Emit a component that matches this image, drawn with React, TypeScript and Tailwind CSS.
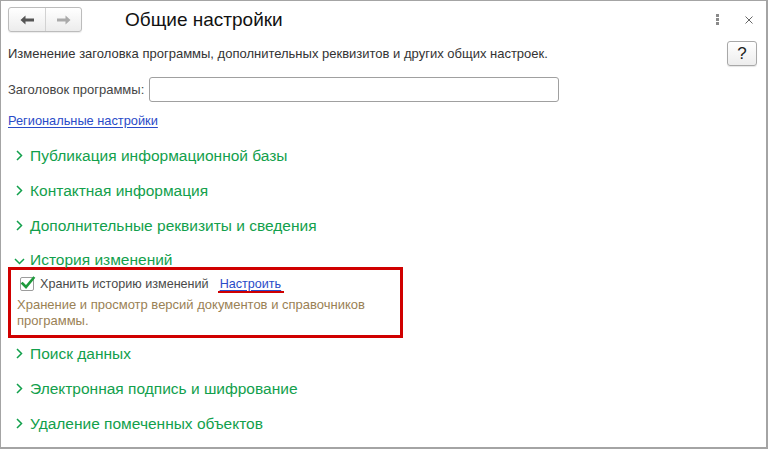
import React from "react";

const GREEN = "text-[#12a04c]";

function Chevron({ down = false }: { down?: boolean }) {
  return down ? (
    <svg width="11" height="7" viewBox="0 0 11 7" className="shrink-0">
      <path d="M1 1 L5.5 5.5 L10 1" fill="none" stroke="#12a04c" strokeWidth="1.5" />
    </svg>
  ) : (
    <svg width="7" height="11" viewBox="0 0 7 11" className="shrink-0">
      <path d="M1 1 L5.5 5.5 L1 10" fill="none" stroke="#12a04c" strokeWidth="1.5" />
    </svg>
  );
}

function Section({ title }: { title: string }) {
  return (
    <div className="h-[35px] flex items-center">
      <div className="w-[22px] flex justify-center pl-[1px]">
        <Chevron />
      </div>
      <span className={`text-[15.5px] ${GREEN}`}>{title}</span>
    </div>
  );
}

export default function App() {
  return (
    <div
      className="w-[768px] h-[449px] bg-white border-t border-l border-r-2 border-b-2 border-[#a4a4a4] overflow-hidden"
      style={{ fontFamily: '"Liberation Sans", Arial, sans-serif' }}
    >
      {/* header */}
      <div className="h-[38px] flex items-start pt-[6px] pl-[7px] pr-[13px]">
        <div className="flex h-[25px] w-[74px] rounded-[3px] border border-[#bcbcbc] bg-gradient-to-b from-white to-[#ececec] shadow-[0_1px_1px_rgba(0,0,0,0.08)]">
          <div className="w-[37px] flex items-center justify-center border-r border-[#d2d2d2]">
            <svg width="15" height="10" viewBox="0 0 15 10">
              <path d="M0.5 5 L5.5 0.5 L5.5 3.5 L14 3.5 L14 6.5 L5.5 6.5 L5.5 9.5 Z" fill="#555" />
            </svg>
          </div>
          <div className="flex-1 flex items-center justify-center">
            <svg width="15" height="10" viewBox="0 0 15 10">
              <path d="M14.5 5 L9.5 0.5 L9.5 3.5 L1 3.5 L1 6.5 L9.5 6.5 L9.5 9.5 Z" fill="#aaa" />
            </svg>
          </div>
        </div>
        <div className="ml-[43px] text-[19px] leading-[25px] text-[#111]">Общие настройки</div>
        <div className="ml-auto flex items-center h-[25px] gap-[26px]">
          <svg width="3" height="11" viewBox="0 0 3 11">
            <rect x="0" y="0" width="3" height="3" fill="#8a8a8a" />
            <rect x="0" y="4" width="3" height="3" fill="#8a8a8a" />
            <rect x="0" y="8" width="3" height="3" fill="#8a8a8a" />
          </svg>
          <svg width="8" height="8" viewBox="0 0 8 8">
            <path d="M0.5 0.5 L7.5 7.5 M7.5 0.5 L0.5 7.5" stroke="#666" strokeWidth="1" />
          </svg>
        </div>
      </div>

      {/* description */}
      <div className="mt-[2px] h-[25px] flex items-center pl-[7px] pr-[9px]">
        <span className="text-[13px] text-[#333]">
          Изменение заголовка программы, дополнительных реквизитов и других общих настроек.
        </span>
        <div className="ml-auto w-[30px] h-[25px] rounded-[3px] border border-[#a8a8a8] bg-gradient-to-b from-white to-[#ededed] flex items-center justify-center text-[17px] text-[#222] shadow-[0_1px_1px_rgba(0,0,0,0.1)]">
          ?
        </div>
      </div>

      {/* title input */}
      <div className="mt-[11px] h-[25px] flex items-center pl-[7px]">
        <span className="text-[13px] text-[#444]">Заголовок программы:</span>
        <div className="ml-[5px] w-[410px] h-[25px] rounded-[3px] border border-[#a0a0a0] bg-white" />
      </div>

      {/* link */}
      <div className="mt-[10px] h-[17px] flex items-center pl-[7px]">
        <span className="text-[12.8px] text-[#2a4bc8] underline underline-offset-2">Региональные настройки</span>
      </div>

      {/* sections */}
      <div className="mt-[9px] pl-[7px]">
        <Section title="Публикация информационной базы" />
        <Section title="Контактная информация" />
        <Section title="Дополнительные реквизиты и сведения" />
        <div className="h-[24px] flex items-start pt-[9px]">
          <div className="w-[22px] flex justify-center items-center h-[16px] pt-[2px]">
            <Chevron down />
          </div>
          <span className={`text-[15.5px] leading-[16px] ${GREEN}`}>История изменений</span>
        </div>

        <div className="w-[395px] h-[71px] border-[3px] border-[#d00000] pl-[6px] pt-[7px]">
          <div className="flex items-center h-[14px]">
            <div className="relative ml-[3px] w-[14px] h-[14px] rounded-[2px] border border-[#9c9c9c] bg-white">
              <svg width="16" height="16" viewBox="0 0 16 16" className="absolute -left-[1px] -top-[3px]">
                <path d="M2.5 8.5 L6 12 L13.5 3" fill="none" stroke="#1e9a3c" strokeWidth="2.6" strokeLinecap="square" />
              </svg>
            </div>
            <span className="ml-[6px] text-[12.6px] text-[#4a4a4a]">Хранить историю изменений</span>
            <span className="relative ml-[11px] text-[12.6px] text-[#2a4bc8] underline underline-offset-2">
              Настроить
              <span className="absolute -left-[2px] -right-[3px] top-[16px] h-[2px] bg-[#d00000]" />
            </span>
          </div>
          <div className="mt-[6px] text-[13px] leading-[16px] text-[#9a8155] w-[380px]">
            Хранение и просмотр версий документов и справочников
            <br />
            программы.
          </div>
        </div>

        <div className="-mt-[2px]">
          <Section title="Поиск данных" />
          <Section title="Электронная подпись и шифрование" />
          <Section title="Удаление помеченных объектов" />
        </div>
      </div>
    </div>
  );
}
